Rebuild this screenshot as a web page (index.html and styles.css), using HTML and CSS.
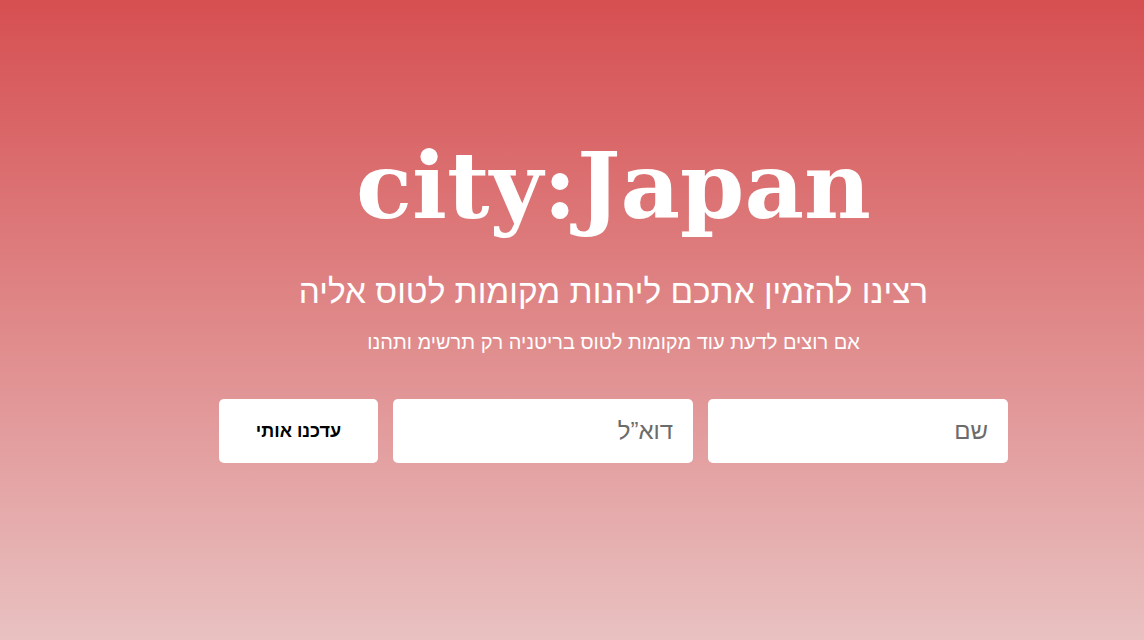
FILE: index.html
```html
<!DOCTYPE html>
<html lang="he" dir="rtl">
<head>
<meta charset="utf-8">
<title>city:Japan</title>
<link rel="stylesheet" href="styles.css">
</head>
<body>
<main class="hero">
  <h1 class="title" dir="ltr">city:Japan</h1>
  <h2 class="subtitle">רצינו להזמין אתכם ליהנות מקומות לטוס אליה</h2>
  <p class="lead">אם רוצים לדעת עוד מקומות לטוס בריטניה רק תרשימ ותהנו</p>
  <form class="signup">
    <input class="field" type="text" placeholder="שם">
    <input class="field" type="email" placeholder="דוא”ל">
    <button class="btn" type="button">עדכנו אותי</button>
  </form>
</main>
</body>
</html>
```

FILE: styles.css
```css
html, body {
  margin: 0;
  height: 100%;
}
body {
  background: linear-gradient(to bottom, #d64f51 0%, #e9c1c1 100%);
  font-family: "Liberation Sans", Arial, sans-serif;
  color: #fff;
}
.hero {
  display: flex;
  flex-direction: column;
  align-items: center;
  padding: 128px 0 0 83px;
}
.title {
  margin: 0;
  font-family: "DejaVu Serif", Georgia, serif;
  font-weight: bold;
  font-size: 92px;
  line-height: 116px;
}
.subtitle {
  margin: 28px 0 0;
  font-weight: normal;
  font-size: 33.4px;
  line-height: 40px;
}
.lead {
  margin: 16px 0 0;
  font-size: 20px;
  line-height: 28px;
}
.signup {
  display: flex;
  gap: 15px;
  margin-top: 43px;
}
.field, .btn {
  box-sizing: border-box;
  height: 64px;
  border: 0;
  border-radius: 5px;
  background: #fff;
  font-family: "Liberation Sans", Arial, sans-serif;
}
.field {
  width: 300px;
  padding: 0 20px;
  font-size: 24px;
  color: #333;
}
.field::placeholder {
  color: #6b6b6b;
}
.btn {
  width: 159px;
  font-size: 18px;
  font-weight: bold;
  color: #000;
}
```
